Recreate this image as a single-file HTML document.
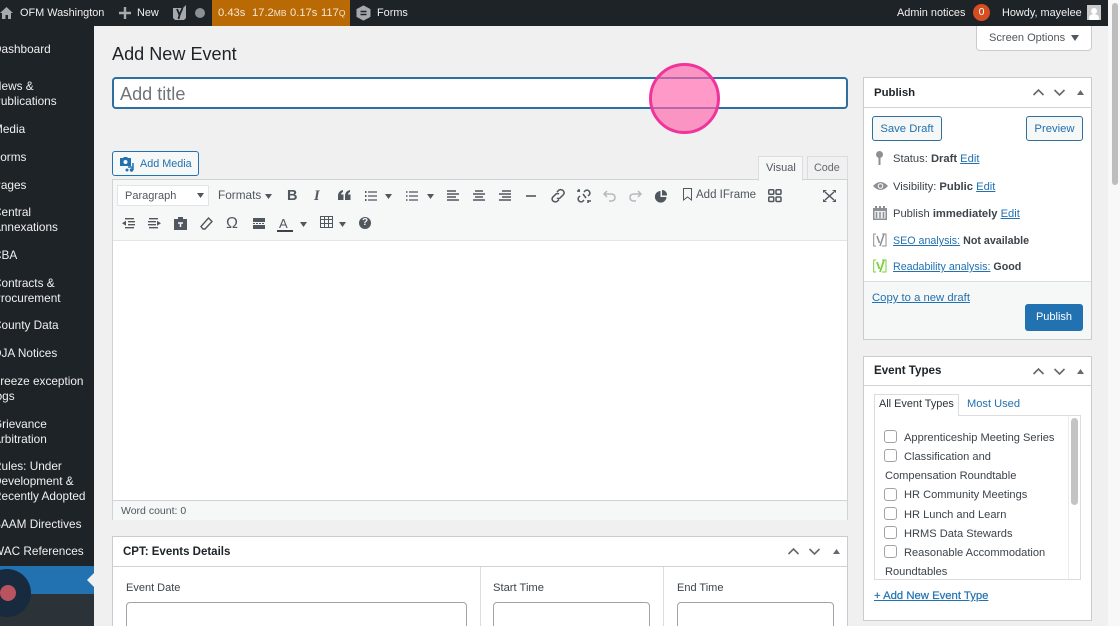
<!DOCTYPE html>
<html><head><meta charset="utf-8"><style>
html,body{margin:0;padding:0;width:1120px;height:626px;overflow:hidden;background:#f0f0f1}
#p{position:relative;width:1120px;height:626px;overflow:hidden;background:#f0f0f1;font-family:"Liberation Sans",sans-serif;color:#3c434a;font-size:12px;filter:blur(.3px)}
.a{position:absolute}
.t{position:absolute;white-space:nowrap;line-height:16px}
.w{color:#f0f0f1;font-size:10.9px}
.s{color:#f0f0f1;font-size:11.8px;line-height:15px;white-space:nowrap;position:absolute;left:-7px}
.l{color:#2271b1;text-decoration:underline}
b{font-weight:bold}
.box{position:absolute;background:#fff;border:1px solid #c9ccd0;box-sizing:border-box}
.cb{position:absolute;left:884px;width:11px;height:11px;border:1px solid #a0a3a7;border-radius:3px;background:#fff}
.o{font-size:11.1px;color:#3c434a}
svg{position:absolute;overflow:visible}
</style></head><body><div id="p">
<div class="a" style="left:1108px;top:0;width:12px;height:626px;background:#f8f8f8"></div>
<div class="a" style="left:1112px;top:3px;width:6px;height:182px;background:#bdbdbd;border-radius:3px"></div>
<!-- top bar -->
<div class="a" style="left:0;top:0;width:1108px;height:26px;background:#1d2327"></div>
<div class="a" style="left:212px;top:0;width:138px;height:26px;background:#b96a05"></div>
<svg style="left:0;top:6px" width="14" height="14"><path d="M0 7L6.500 1 13 7M2 7v6h3.500V9h2.500v4H11V7" fill="#a7aaad"/></svg>
<div class="t w" style="left:20px;top:5px">OFM Washington</div>
<svg style="left:119px;top:7px" width="12" height="12"><path d="M6 0v12M0 6h12" stroke="#a7aaad" stroke-width="2.400"/></svg>
<div class="t w" style="left:137px;top:5px">New</div>
<svg style="left:172px;top:5px" width="15" height="16"><path d="M1 3h10l3-3v13l-2 2H3l-2-2z" fill="#a7aaad"/><path d="M5 4l2.500 6 3-7M7.500 10l-1 4" stroke="#1d2327" stroke-width="1.800" fill="none"/></svg>
<div class="a" style="left:195px;top:8px;width:10px;height:10px;border-radius:50%;background:#8c8f94"></div>
<div class="t" style="left:218px;top:5px;color:#f7e6cf;font-size:11.200px">0.43s</div>
<div class="t" style="left:252px;top:5px;color:#f7e6cf;font-size:11.200px">17.2<span style="font-size:8.500px">MB</span></div>
<div class="t" style="left:290px;top:5px;color:#f7e6cf;font-size:11.200px">0.17s</div>
<div class="t" style="left:321px;top:5px;color:#f7e6cf;font-size:11.200px">117<span style="font-size:8.500px">Q</span></div>
<svg style="left:357px;top:6px" width="13" height="14"><path d="M6.500 0L13 3.500v7L6.500 14 0 10.500v-7z" fill="#a7aaad" stroke="#a7aaad" stroke-linejoin="round"/><path d="M3.500 5.500h6M9.500 8.500h-6" stroke="#1d2327" stroke-width="1.500" fill="none"/></svg>
<div class="t w" style="left:377px;top:5px">Forms</div>
<div class="t w" style="left:897px;top:5px">Admin notices</div>
<div class="a" style="left:973px;top:4px;width:17px;height:17px;border-radius:50%;background:#d54e21;color:#fff;font-size:10.500px;line-height:16px;text-align:center">0</div>
<div class="t w" style="left:1002px;top:5px">Howdy, mayelee</div>
<div class="a" style="left:1087px;top:5px;width:14px;height:15px;background:#c9c9c9;overflow:hidden"><div class="a" style="left:4px;top:3px;width:6px;height:6px;border-radius:50%;background:#fff"></div><div class="a" style="left:2px;top:9px;width:10px;height:8px;border-radius:50%;background:#fff"></div></div>
<!-- sidebar -->
<div class="a" style="left:0;top:26px;width:94px;height:600px;background:#1d2327"></div>
<div class="a" style="left:0;top:566px;width:94px;height:28px;background:#2271b1"></div>
<div class="a" style="left:0;top:594px;width:94px;height:32px;background:#2c3338"></div>
<svg style="left:87px;top:573px" width="7" height="14"><path d="M7 0L0 7l7 7z" fill="#f0f0f1"/></svg>
<div class="s" style="top:42px">Dashboard</div>
<div class="s" style="top:79px">News &amp;<br>Publications</div>
<div class="s" style="top:122px">Media</div>
<div class="s" style="top:150px">Forms</div>
<div class="s" style="top:178px">Pages</div>
<div class="s" style="top:205px">Central<br>Annexations</div>
<div class="s" style="top:248px">CBA</div>
<div class="s" style="top:276px">Contracts &amp;<br>Procurement</div>
<div class="s" style="top:318px">County Data</div>
<div class="s" style="top:346px">DJA Notices</div>
<div class="s" style="top:374px">Freeze exception<br>logs</div>
<div class="s" style="top:417px">Grievance<br>Arbitration</div>
<div class="s" style="top:459px">Rules: Under<br>Development &amp;<br>Recently Adopted</div>
<div class="s" style="top:517px">SAAM Directives</div>
<div class="s" style="top:544px">WAC References</div>
<div class="a" style="left:-17px;top:569px;width:48px;height:48px;border-radius:50%;background:#172a3e"></div>
<div class="a" style="left:0;top:585px;width:16px;height:16px;border-radius:50%;background:#b9535f"></div>
<!-- heading & title -->
<div class="t" style="left:112px;top:42px;font-size:18.100px;line-height:24px;color:#1d2327">Add New Event</div>
<div class="a" style="left:976px;top:26px;width:114px;height:24px;background:#fff;border:1px solid #c9ccd0;border-top:0;border-radius:0 0 4px 4px"></div>
<div class="t" style="left:989px;top:30px;font-size:11.050px;color:#50575e">Screen Options</div>
<svg style="left:1071px;top:35px" width="8" height="6"><path d="M0 0h8L4 6z" fill="#50575e"/></svg>
<div class="a" style="left:112px;top:77px;width:736px;height:32px;background:#fff;border:2px solid #2f6f9f;border-radius:4px;box-sizing:border-box"></div>
<div class="t" style="left:120px;top:82px;font-size:18.100px;line-height:24px;color:#6f7479">Add title</div>
<!-- add media -->
<div class="a" style="left:112px;top:151px;width:87px;height:25px;background:#f6f7f7;border:1px solid #2271b1;border-radius:3px;box-sizing:border-box"></div>
<svg style="left:120px;top:157px" width="15" height="14"><path d="M0 1h3l1-1h3l1 1h3v8H0z" fill="#2271b1"/><circle cx="5.500" cy="5" r="2" fill="#f6f7f7"/><path d="M13 6v7M8 10h5" stroke="#2271b1" stroke-width="1.500"/><circle cx="11.500" cy="13" r="1.700" fill="#2271b1"/><circle cx="7" cy="13" r="1.500" fill="#2271b1"/></svg>
<div class="t" style="left:140px;top:156px;color:#2271b1;font-size:10.800px;line-height:17px">Add Media</div>
<!-- tabs -->
<div class="a" style="left:758px;top:156px;width:45px;height:25px;background:#f6f7f7;border:1px solid #dcdcde;border-bottom:0;box-sizing:border-box;z-index:2"></div>
<div class="t" style="left:766px;top:160px;font-size:11px;z-index:3;color:#50575e">Visual</div>
<div class="a" style="left:807px;top:156px;width:41px;height:24px;background:#f0f0f1;border:1px solid #dcdcde;border-bottom:0;box-sizing:border-box"></div>
<div class="t" style="left:814px;top:160px;font-size:10.800px;color:#646970">Code</div>
<!-- editor -->
<div class="a" style="left:112px;top:179px;width:736px;height:341px;background:#fff;border:1px solid #d0d2d5;box-sizing:border-box"></div>
<div class="a" style="left:113px;top:180px;width:734px;height:60px;background:#f6f7f7;border-bottom:1px solid #e2e4e7"></div>
<div class="a" style="left:113px;top:500px;width:734px;height:19px;background:#f6f7f7;border-top:1px solid #d0d2d5"></div>
<div class="t" style="left:121px;top:503px;font-size:10.500px;color:#50575e">Word count: 0</div>
<div class="a" style="left:117px;top:185px;width:92px;height:21px;background:#fff;border:1px solid #e2e4e7;box-sizing:border-box"></div>
<div class="t" style="left:125px;top:188px;font-size:11px;color:#50575e">Paragraph</div>
<svg style="left:197px;top:193px" width="7" height="6"><path d="M0 0h7L3.500 5z" fill="#50575e"/></svg>
<div class="t" style="left:218px;top:187px;font-size:11.800px;color:#50575e">Formats</div>
<svg style="left:265px;top:194px" width="7" height="6"><path d="M0 0h7L3.500 5z" fill="#50575e"/></svg>
<!-- toolbar row1 -->
<div class="t" style="left:287px;top:188px;font-size:14.500px;font-weight:bold;color:#50575e">B</div>
<div class="t" style="left:314px;top:188px;font-size:14.500px;font-style:italic;font-family:'Liberation Serif',serif;color:#50575e;font-weight:bold">I</div>
<svg style="left:338px;top:190px" width="13" height="11"><path d="M0 6Q0 1 5 0v2Q3 3 3 4.500h2.500V10H0zM7 6q0-5 5-6v2q-2 1-2 2.500h2.500V10H7z" fill="#50575e"/></svg>
<svg style="left:365px;top:191px" width="12" height="10"><path d="M3 1h9M3 5h9M3 9h9" stroke="#50575e" stroke-width="1.200" fill="none"/><path d="M0 1h1.500M0 5h1.500M0 9h1.500" stroke="#50575e" stroke-width="2"/></svg>
<svg style="left:385px;top:194px" width="7" height="6"><path d="M0 0h7L3.500 5z" fill="#50575e"/></svg>
<svg style="left:406px;top:191px" width="12" height="10"><path d="M3 1h9M3 5h9M3 9h9" stroke="#50575e" stroke-width="1.200"/><path d="M0 1h1.500M0 5h1.500M0 9h1.500" stroke="#50575e" stroke-width="1.500"/></svg>
<svg style="left:427px;top:194px" width="7" height="6"><path d="M0 0h7L3.500 5z" fill="#50575e"/></svg>
<svg style="left:447px;top:190px" width="12" height="12" fill="none" stroke="#50575e" stroke-width="1.500"><path d="M0 1h9M0 4h12M0 7h9M0 10h12"/></svg>
<svg style="left:473px;top:190px" width="12" height="12" fill="none" stroke="#50575e" stroke-width="1.500"><path d="M2 1h8M0 4h12M2 7h8M0 10h12"/></svg>
<svg style="left:499px;top:190px" width="12" height="12" fill="none" stroke="#50575e" stroke-width="1.500"><path d="M3 1h9M0 4h12M3 7h9M0 10h12"/></svg>
<svg style="left:526px;top:195px" width="10" height="2"><path d="M0 1h10" stroke="#50575e" stroke-width="1.600"/></svg>
<svg style="left:551px;top:189px" width="14" height="14" fill="none" stroke="#50575e" stroke-width="1.500"><path d="M6 3l2-2q2-1 4 .5 2 2 .5 4L9 9q-2 1-3 0M8 5q-1.500-1-3 0L1.500 8.500q-1 2 .5 3.500 2 1.500 4 .5l2-2"/></svg>
<svg style="left:577px;top:189px" width="14" height="14" fill="none" stroke="#50575e" stroke-width="1.500"><path d="M7 3l1.500-1.500q2-1 3.500.5 1.500 2 .5 3.500L11 7M7 11l-1.500 1.500q-2 1-3.500-.5-1.500-2-.5-3.500L3 7M2 0v3M0 2h3M11 14v-3M14 12h-3M6 5l3 4"/></svg>
<svg style="left:603px;top:190px" width="13" height="11" fill="none" stroke="#b5b9bd" stroke-width="1.500"><path d="M4 1L1 4l3 3M1 4h7q4 0 4 3.500T8 11H6"/></svg>
<svg style="left:629px;top:190px" width="13" height="11" fill="none" stroke="#b5b9bd" stroke-width="1.500"><path d="M9 1l3 3-3 3M12 4H5Q1 4 1 7.500T5 11h2"/></svg>
<svg style="left:655px;top:190px" width="12" height="12"><path d="M5.500 1v6h6A5.800 5.800 0 1 1 5.500 1z" fill="#50575e"/><path d="M7 0a5 5 0 0 1 5 5.500H7z" fill="#50575e"/></svg>
<svg style="left:683px;top:188px" width="9" height="13" fill="none" stroke="#50575e" stroke-width="1"><path d="M.5.500h8v11.500l-4-3-4 3z"/></svg>
<div class="t" style="left:696px;top:187px;font-size:11.500px;color:#50575e">Add IFrame</div>
<svg style="left:768px;top:189px" width="14" height="13" fill="none" stroke="#50575e" stroke-width="1.500"><rect x=".75" y=".75" width="5" height="4.500" rx="1"/><rect x="8" y=".75" width="5" height="4.500" rx="1"/><rect x=".75" y="8" width="5" height="4.500" rx="1"/><rect x="8" y="8" width="5" height="4.500" rx="1"/></svg>
<svg style="left:823px;top:190px" width="13" height="12"><path d="M2 2l9 8M11 2l-9 8" stroke="#50575e" stroke-width="1.500"/><path d="M0 0h4L0 3zM13 0H9l4 3zM0 12h4L0 9zM13 12H9l4-3z" fill="#50575e"/></svg>
<!-- toolbar row2 -->
<svg style="left:122px;top:218px" width="13" height="11" fill="none" stroke="#50575e" stroke-width="1.400"><path d="M3 .7h9M6 3.700h7M6 6.700h7M3 9.700h9"/><path d="M0 5.200l4-2.500v5z" fill="#50575e" stroke="none"/></svg>
<svg style="left:148px;top:218px" width="13" height="11" fill="none" stroke="#50575e" stroke-width="1.400"><path d="M1 .7h9M0 3.700h8M0 6.700h8M1 9.700h9"/><path d="M13 5.200l-4-2.500v5z" fill="#50575e" stroke="none"/></svg>
<svg style="left:174px;top:217px" width="13" height="13"><path d="M0 2h4V0h5v2h4v11H0z" fill="#50575e"/><path d="M4 6h5M6.500 6v4" stroke="#f6f7f7" stroke-width="1.500"/></svg>
<svg style="left:200px;top:217px" width="13" height="13" fill="none" stroke="#50575e" stroke-width="1.400"><path d="M8.500 1L12 4.500 5 12H3L1 9.500z"/></svg>
<div class="t" style="left:226px;top:216px;font-size:16px;color:#50575e">Ω</div>
<svg style="left:253px;top:218px" width="12" height="11"><path d="M0 0h12v4H0zM0 7h12v4H0z" fill="#50575e"/><path d="M0 5.500h12" stroke="#50575e" stroke-dasharray="2 1"/></svg>
<div class="t" style="left:279px;top:216px;font-size:13px;color:#50575e">A</div>
<div class="a" style="left:277px;top:230px;width:16px;height:2px;background:#3c434a"></div>
<svg style="left:300px;top:222px" width="7" height="6"><path d="M0 0h7L3.500 5z" fill="#50575e"/></svg>
<svg style="left:320px;top:216px" width="13" height="12" fill="none" stroke="#50575e" stroke-width="1"><path d="M.5.500h12v11H.5zM.5 3.500h12M.5 7.500h12M4.500.500v11M8.500.500v11"/></svg>
<svg style="left:339px;top:222px" width="7" height="6"><path d="M0 0h7L3.500 5z" fill="#50575e"/></svg>
<div class="a" style="left:359px;top:217px;width:12px;height:12px;border-radius:50%;background:#50575e;color:#f6f7f7;font-size:10px;font-weight:bold;line-height:12px;text-align:center">?</div>
<!-- events details -->
<div class="box" style="left:112px;top:536px;width:736px;height:110px"></div>
<div class="a" style="left:113px;top:566px;width:734px;height:1px;background:#d0d2d5"></div>
<div class="t" style="left:123px;top:544px;font-size:11.500px;font-weight:bold;color:#1d2327">CPT: Events Details</div>
<svg style="left:788px;top:548px" width="11" height="7" fill="none" stroke="#646970" stroke-width="1.600"><path d="M.5 6l5-5 5 5"/></svg>
<svg style="left:809px;top:548px" width="11" height="7" fill="none" stroke="#646970" stroke-width="1.600"><path d="M.5 1l5 5 5-5"/></svg>
<svg style="left:833px;top:549px" width="7" height="5"><path d="M0 5h7L3.500 0z" fill="#646970"/></svg>
<div class="a" style="left:480px;top:567px;width:1px;height:60px;background:#dcdcde"></div>
<div class="a" style="left:663px;top:567px;width:1px;height:60px;background:#dcdcde"></div>
<div class="t" style="left:126px;top:580px;font-size:11px">Event Date</div>
<div class="t" style="left:493px;top:580px;font-size:11.200px">Start Time</div>
<div class="t" style="left:677px;top:580px;font-size:11px">End Time</div>
<div class="a" style="left:126px;top:602px;width:341px;height:40px;background:#fff;border:1px solid #a0a3a7;border-radius:4px;box-sizing:border-box"></div>
<div class="a" style="left:493px;top:602px;width:157px;height:40px;background:#fff;border:1px solid #a0a3a7;border-radius:4px;box-sizing:border-box"></div>
<div class="a" style="left:677px;top:602px;width:157px;height:40px;background:#fff;border:1px solid #a0a3a7;border-radius:4px;box-sizing:border-box"></div>
<!-- publish -->
<div class="box" style="left:863px;top:77px;width:229px;height:263px"></div>
<div class="a" style="left:864px;top:107px;width:227px;height:1px;background:#d0d2d5"></div>
<div class="t" style="left:874px;top:85px;font-size:11.400px;font-weight:bold;color:#1d2327">Publish</div>
<svg style="left:1033px;top:89px" width="11" height="7" fill="none" stroke="#646970" stroke-width="1.600"><path d="M.5 6l5-5 5 5"/></svg>
<svg style="left:1054px;top:89px" width="11" height="7" fill="none" stroke="#646970" stroke-width="1.600"><path d="M.5 1l5 5 5-5"/></svg>
<svg style="left:1077px;top:90px" width="7" height="5"><path d="M0 5h7L3.500 0z" fill="#646970"/></svg>
<div class="a" style="left:872px;top:116px;width:70px;height:25px;background:#f6f7f7;border:1px solid #2f6f9f;border-radius:3px;box-sizing:border-box;color:#2271b1;font-size:11.300px;line-height:25px;text-align:center">Save Draft</div>
<div class="a" style="left:1026px;top:116px;width:57px;height:25px;background:#f6f7f7;border:1px solid #2f6f9f;border-radius:3px;box-sizing:border-box;color:#2271b1;font-size:11.300px;line-height:25px;text-align:center">Preview</div>
<svg style="left:876px;top:151px" width="7" height="14"><circle cx="3.500" cy="3.500" r="3.500" fill="#8c8f94"/><path d="M3.500 6v8" stroke="#8c8f94" stroke-width="2"/></svg>
<div class="t" style="left:893px;top:151px;font-size:11.200px">Status: <b>Draft</b> <span class="l">Edit</span></div>
<svg style="left:873px;top:181px" width="15" height="10"><path d="M0 5Q7.500-3 15 5 7.500 13 0 5z" fill="#8c8f94"/><circle cx="7.500" cy="5" r="2.800" fill="#fff"/><circle cx="7.500" cy="5" r="1.800" fill="#8c8f94"/></svg>
<div class="t" style="left:893px;top:179px;font-size:11.200px">Visibility: <b>Public</b> <span class="l">Edit</span></div>
<svg style="left:873px;top:206px" width="14" height="14"><path d="M0 2h14v12H0z" fill="#8c8f94"/><path d="M2 0h2v2H2zM6 0h2v2H6zM10 0h2v2h-2z" fill="#8c8f94"/><path d="M1.500 5h11v7.500h-11z" fill="#f0f0f1"/><path d="M3.500 6v6M7 6v6M10.500 6v6" stroke="#8c8f94" stroke-width="1.500"/></svg>
<div class="t" style="left:893px;top:206px;font-size:11.200px">Publish <b>immediately</b> <span class="l">Edit</span></div>
<svg style="left:873px;top:233px" width="14" height="14" fill="none" stroke="#8c8f94"><path d="M3 1H.7v12H3M9 1h4v12H9"/><path d="M4 3l2.500 7M11 1L7 13" stroke="#8c8f94" stroke-width="1.500"/></svg>
<div class="t" style="left:893px;top:233px;font-size:10.700px"><span class="l">SEO analysis:</span> <b>Not available</b></div>
<svg style="left:873px;top:259px" width="14" height="14" fill="none" stroke="#7ad03a"><path d="M3 1H.7v12H3M9 1h4v12H9"/><path d="M4 3l2.500 7M11 1L7 13" stroke-width="1.800"/></svg>
<div class="t" style="left:893px;top:259px;font-size:10.700px"><span class="l">Readability analysis:</span> <b>Good</b></div>
<div class="a" style="left:864px;top:281px;width:227px;height:58px;background:#f6f7f7;border-top:1px solid #dcdcde;box-sizing:border-box"></div>
<div class="t l" style="left:872px;top:290px;font-size:11.300px">Copy to a new draft</div>
<div class="a" style="left:1025px;top:304px;width:58px;height:27px;background:#2271b1;border-radius:3px;color:#fff;font-size:11px;line-height:27px;text-align:center">Publish</div>
<!-- event types -->
<div class="box" style="left:863px;top:356px;width:229px;height:265px"></div>
<div class="a" style="left:864px;top:385px;width:227px;height:1px;background:#d0d2d5"></div>
<div class="t" style="left:874px;top:363px;font-size:11.600px;font-weight:bold;color:#1d2327">Event Types</div>
<svg style="left:1033px;top:368px" width="11" height="7" fill="none" stroke="#646970" stroke-width="1.600"><path d="M.5 6l5-5 5 5"/></svg>
<svg style="left:1054px;top:368px" width="11" height="7" fill="none" stroke="#646970" stroke-width="1.600"><path d="M.5 1l5 5 5-5"/></svg>
<svg style="left:1077px;top:369px" width="7" height="5"><path d="M0 5h7L3.500 0z" fill="#646970"/></svg>
<div class="a" style="left:874px;top:415px;width:207px;height:165px;border:1px solid #dcdcde;box-sizing:border-box"></div>
<div class="a" style="left:874px;top:394px;width:85px;height:22px;background:#fff;border:1px solid #dcdcde;border-bottom:0;box-sizing:border-box"></div>
<div class="t" style="left:879px;top:396px;font-size:10.900px;color:#2c3338">All Event Types</div>
<div class="t" style="left:967px;top:396px;font-size:11.100px;color:#2271b1">Most Used</div>
<div class="a" style="left:1068px;top:416px;width:1px;height:163px;background:#ececec"></div>
<div class="a" style="left:1071px;top:418px;width:7px;height:87px;background:#c4c4c4;border-radius:4px"></div>
<div class="cb" style="top:430px"></div><div class="t o" style="left:904px;top:430px">Apprenticeship Meeting Series</div>
<div class="cb" style="top:449px"></div><div class="t o" style="left:904px;top:449px">Classification and</div>
<div class="t o" style="left:885px;top:468px">Compensation Roundtable</div>
<div class="cb" style="top:488px"></div><div class="t o" style="left:904px;top:487px">HR Community Meetings</div>
<div class="cb" style="top:507px"></div><div class="t o" style="left:904px;top:507px">HR Lunch and Learn</div>
<div class="cb" style="top:526px"></div><div class="t o" style="left:904px;top:526px">HRMS Data Stewards</div>
<div class="cb" style="top:545px"></div><div class="t o" style="left:904px;top:545px">Reasonable Accommodation</div>
<div class="t o" style="left:885px;top:564px">Roundtables</div>
<div class="t l" style="left:874px;top:588px;font-size:11.300px;-webkit-text-stroke:.2px #2271b1">+ Add New Event Type</div>
<!-- pink cursor -->
<div class="a" style="left:649px;top:63px;width:71px;height:71px;border-radius:50%;background:rgba(255,100,170,.65);border:3px solid #f0359a;box-sizing:border-box"></div>
</div></body></html>
